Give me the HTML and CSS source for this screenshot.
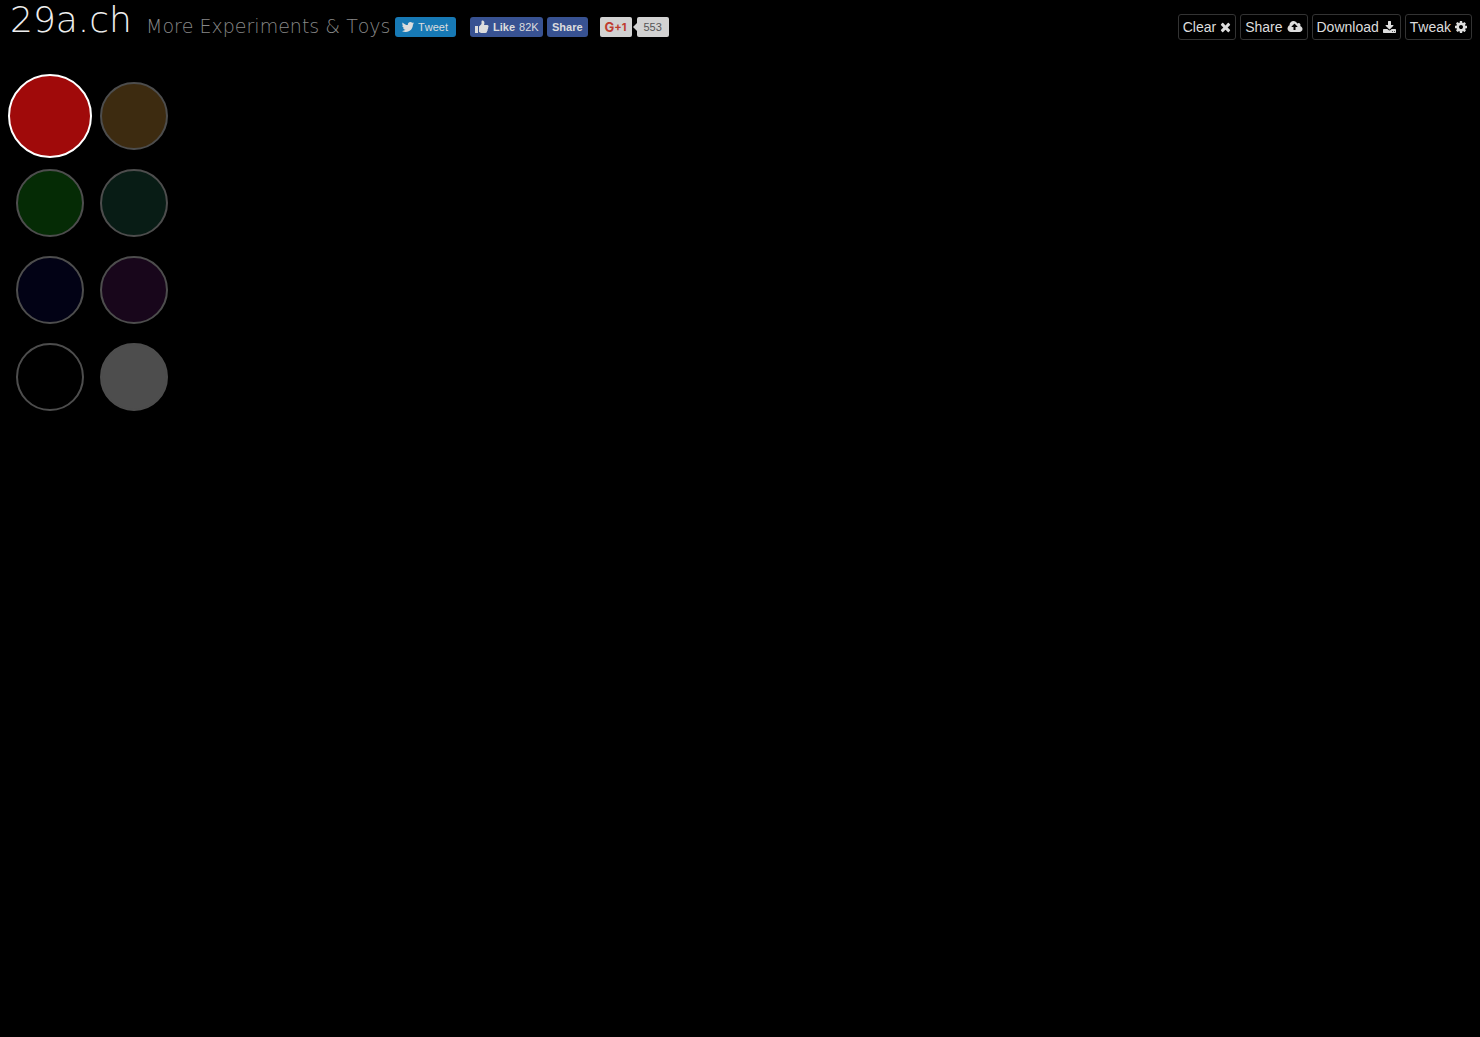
FILE: index.html
```html
<!DOCTYPE html>
<html lang="en">

<head>
  <meta charset="UTF-8">
  <meta name="viewport" content="width=device-width, initial-scale=1.0">
  <title>29a.ch</title>
  <link rel="stylesheet" href="styles.css">
</head>

<body>
  <header class="header">
    <a class="brand" href="#">29a.ch</a>
    <a class="more" href="#">More Experiments &amp; Toys</a>
    <div class="social">
      <a class="tweet" href="#">
        <svg width="14" height="14" viewBox="0 0 72 72"><path d="M67.812 16.141a26.246 26.246 0 0 1-7.519 2.06 13.134 13.134 0 0 0 5.756-7.244 26.127 26.127 0 0 1-8.313 3.176A13.075 13.075 0 0 0 48.182 10c-7.229 0-13.092 5.861-13.092 13.093 0 1.026.118 2.021.338 2.981-10.885-.548-20.528-5.757-26.987-13.679a13.048 13.048 0 0 0-1.771 6.581c0 4.542 2.312 8.551 5.824 10.898a13.048 13.048 0 0 1-5.93-1.638c-.002.055-.002.110-.002.162 0 6.345 4.513 11.638 10.504 12.84a13.177 13.177 0 0 1-3.449.457c-.846 0-1.667-.078-2.465-.231 1.667 5.2 6.499 8.986 12.23 9.09a26.276 26.276 0 0 1-16.26 5.606A26.21 26.21 0 0 1 4 55.976a37.036 37.036 0 0 0 20.067 5.882c24.083 0 37.251-19.949 37.251-37.249 0-.566-.014-1.134-.039-1.694a26.597 26.597 0 0 0 6.533-6.774z"/></svg>
        Tweet
      </a>
      <div class="facebook">
        <button class="fb like" type="button">
          <svg width="14" height="14" viewBox="0 0 14 14"><path d="M0 6h3v7H0zM4 6.500L6.500 4V1.500Q6.500 0 8 .5Q9.500 1 9.500 3L9 5h3.500Q14 5.500 13.500 7q-.2.500-.5.700.5 1-.4 1.900.3 1-.5 1.700 0 1.700-1.600 1.700H6L4 12z"/></svg>
          <b>Like</b> 82K
        </button>
        <button class="fb" type="button"><b>Share</b></button>
      </div>
      <div class="google">
        <button class="plus" type="button">G<span>+1</span></button>
        <span class="count">553</span>
      </div>
    </div>
    <nav class="tools">
      <button type="button">Clear <svg width="11" height="14" viewBox="192 0 1408 1792"><path d="M1490 1322q0 40-28 68l-136 136q-28 28-68 28t-68-28l-294-294-294 294q-28 28-68 28t-68-28l-136-136q-28-28-28-68t28-68l294-294-294-294q-28-28-28-68t28-68l136-136q28-28 68-28t68 28l294 294 294-294q28-28 68-28t68 28l136 136q28 28 28 68t-28 68l-294 294 294 294q28 28 28 68z"/></svg></button>
      <button type="button">Share <svg width="16" height="14" viewBox="64 0 1920 1792"><path d="M1344 864q0-14-9-23L983 489q-9-9-23-9t-23 9L586 840q-10 12-10 24 0 14 9 23t23 9h224v352q0 13 9.500 22.500t22.500 9.500h192q13 0 22.500-9.500t9.500-22.500V896h224q13 0 22.500-9.500t9.500-22.500zm640 288q0 159-112.500 271.500T1600 1536H512q-185 0-316.500-131.500T64 1088q0-130 70-240t188-165q-2-30-2-43 0-212 150-362t362-150q156 0 285.500 87T1306 446q71-62 166-62 106 0 181 75t75 181q0 76-41 138 130 31 213.500 135.500T1984 1152z"/></svg></button>
      <button type="button">Download <svg width="13" height="14" viewBox="0 -128 1664 1792"><path d="M1280 1344q0-26-19-45t-45-19-45 19-19 45 19 45 45 19 45-19 19-45zm256 0q0-26-19-45t-45-19-45 19-19 45 19 45 45 19 45-19 19-45zm128-224v320q0 40-28 68t-68 28H96q-40 0-68-28t-28-68v-320q0-40 28-68t68-28h465l135 136q58 56 136 56t136-56l136-136h464q40 0 68 28t28 68zm-325-569q17 41-14 70l-448 448q-18 19-45 19t-45-19L339 621q-31-29-14-70 17-39 59-39h256V64q0-26 19-45t45-19h256q26 0 45 19t19 45v448h256q42 0 59 39z"/></svg></button>
      <button type="button">Tweak <svg width="12" height="14" viewBox="128 0 1536 1792"><path d="M1152 896q0-106-75-181t-181-75-181 75-75 181 75 181 181 75 181-75 75-181zm512-109v222q0 12-8 23t-20 13l-185 28q-19 54-39 91 35 50 107 138 10 12 10 25t-9 23q-27 37-99 108t-94 71q-12 0-26-9l-138-108q-44 23-91 38-16 136-29 186-7 28-36 28H785q-14 0-24.500-8.500T749 1634l-28-184q-49-16-90-37l-141 107q-10 9-25 9-14 0-25-11-126-114-165-168-7-10-7-23 0-12 8-23 15-21 51-66.500t54-70.500q-27-50-41-99l-183-27q-13-2-21-12.500t-8-23.500V783q0-12 8-23t19-13l186-28q14-46 39-92-40-57-107-138-10-12-10-24 0-10 9-23 26-36 98.500-107.500T465 263q13 0 26 10l138 107q44-23 91-38 16-136 29-186 7-28 36-28h222q14 0 24.500 8.500T1043 158l28 184q49 16 90 37l142-107q9-9 24-9 13 0 25 10 129 119 165 170 7 8 7 22 0 12-8 23-15 21-51 66.500t-54 70.500q26 50 41 98l183 28q13 2 21 12.500t8 23.500z"/></svg></button>
    </nav>
  </header>

  <main class="palette">
    <input class="swatch red" type="radio" name="color" aria-label="Red" checked>
    <input class="swatch orange" type="radio" name="color" aria-label="Orange">
    <input class="swatch green" type="radio" name="color" aria-label="Green">
    <input class="swatch teal" type="radio" name="color" aria-label="Teal">
    <input class="swatch blue" type="radio" name="color" aria-label="Blue">
    <input class="swatch purple" type="radio" name="color" aria-label="Purple">
    <input class="swatch black" type="radio" name="color" aria-label="Black">
    <input class="swatch white" type="radio" name="color" aria-label="White">
  </main>
</body>

</html>
```
FILE: styles.css
```css
body {
  margin: 0;
  background: #000;
  color: #ddd;
  font: 14px/20px "Liberation Sans", Arial, sans-serif;
  font-kerning: none;
}
a {
  color: inherit;
  text-decoration: none;
}
button {
  margin: 0;
  font: inherit;
  font-kerning: none;
  color: inherit;
  cursor: pointer;
}
svg {
  flex: none;
  fill: currentColor;
}

.header {
  display: flex;
  align-items: flex-start;
  padding: 0 8px 0 10px;
  height: 74px;
  box-sizing: border-box;
  white-space: nowrap;
}
.brand,
.more {
  font-family: "DejaVu Sans", sans-serif;
  font-weight: 200;
}
.brand {
  width: 136px;
  font-size: 36px;
  line-height: 40px;
  color: #eee;
}
.more {
  width: 249px;
  padding-top: 14px;
  font-size: 19px;
  line-height: 24px;
  color: #888;
}

/* share widgets */
.social {
  display: flex;
  padding-top: 17px;
  font-size: 11px;
}
.tweet,
.fb,
.plus,
.count {
  display: flex;
  align-items: center;
  box-sizing: border-box;
  height: 20px;
  border: 0;
  border-radius: 3px;
}
.tweet {
  width: 61px;
  gap: 3px;
  padding-left: 6px;
  background: #1779b5;
}
.facebook {
  display: flex;
  gap: 4px;
  margin: 0 12px 0 14px;
}
.fb {
  gap: 4px;
  padding: 0 5px;
  background: #385292;
}
.like {
  width: 73px;
  padding-right: 0;
}
.google {
  display: flex;
  gap: 5px;
}
.plus,
.count {
  justify-content: center;
  width: 32px;
  padding: 0;
  border-radius: 2px;
  background: #d2d2d2;
}
.plus {
  font: bold 13px/20px Inter, sans-serif;
  color: #bf3b2e;
}
.plus span {
  font-size: 11px;
}
.count {
  position: relative;
  color: #555;
}
.count::before {
  content: "";
  position: absolute;
  top: 6px;
  left: -4px;
  border: solid transparent;
  border-width: 4px 4px 4px 0;
  border-right-color: #d2d2d2;
}

.tools {
  display: flex;
  gap: 4px;
  margin-left: auto;
  padding-top: 14px;
}
.tools button {
  display: flex;
  align-items: center;
  gap: 4px;
  box-sizing: border-box;
  height: 26px;
  padding: 0 4px;
  border: 1px solid #333;
  border-radius: 3px;
  background: #000;
}

.palette {
  display: grid;
  grid-template-columns: 84px 84px;
  grid-auto-rows: 84px;
  gap: 3px 0;
  place-items: center;
  padding-left: 8px;
}
.swatch {
  appearance: none;
  box-sizing: border-box;
  width: 68px;
  height: 68px;
  margin: 0;
  border: 2px solid #4d4d4d;
  border-radius: 50%;
  cursor: pointer;
}
.swatch:checked {
  width: 84px;
  height: 84px;
  border-color: #fff;
}
.red {
  background: #a00a0a;
}
.orange {
  background: #3d2b10;
}
.green {
  background: #052b05;
}
.teal {
  background: #081c15;
}
.blue {
  background: #020215;
}
.purple {
  background: #18061b;
}
.black {
  background: #000;
}
.white {
  background: #4d4d4d;
}
```
